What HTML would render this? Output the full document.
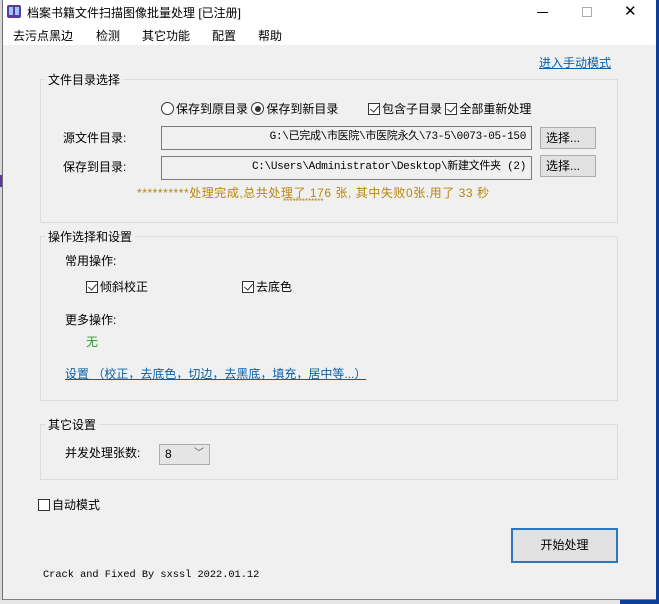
<!DOCTYPE html>
<html><head><meta charset="utf-8"><style>
*{margin:0;padding:0;box-sizing:border-box}
body{width:659px;height:604px;position:relative;overflow:hidden;background:#f0f0f0;font-family:"Liberation Sans","Noto Sans CJK SC",sans-serif;font-size:12px;color:#000}
.a{position:absolute;white-space:nowrap}
.grp{position:absolute;border:1px solid #dcdcdc}
.lg{position:absolute;background:#f0f0f0;padding:0 3px;font-size:12px}
.tb{position:absolute;background:#f0f0f0;border:1px solid #7a7a7a;text-align:right;padding-right:5px;font-family:"Liberation Mono","Noto Sans CJK SC",monospace;font-size:11px;line-height:21px;letter-spacing:-0.3px}
.btn{position:absolute;background:#e1e1e1;border:1px solid #adadad;text-align:center;line-height:20px}
.cb{display:inline-block;width:12px;height:12px;border:1px solid #333;vertical-align:-2px;margin-right:2px;position:relative;background:#fff}
.cb.k::after{content:"";position:absolute;left:3px;top:0px;width:4px;height:7px;border:solid #333;border-width:0 1.5px 1.5px 0;transform:rotate(40deg)}
.rb{display:inline-block;width:13px;height:13px;border:1px solid #333;border-radius:50%;vertical-align:-2px;margin-right:2px;position:relative;background:#fff}
.rb.k::after{content:"";position:absolute;left:2.5px;top:2.5px;width:6px;height:6px;border-radius:50%;background:#333}
.lnk{color:#0b5fa5;text-decoration:underline}
</style></head><body>
<div class="a" style="left:0;top:0;width:3px;height:604px;background:#d8d8d8"></div>
<div class="a" style="left:0;top:175px;width:3px;height:12px;background:#5a3b9a"></div>
<div class="a" style="left:2px;top:0;width:1px;height:600px;background:#707070"></div>
<div class="a" style="left:656px;top:0;width:3px;height:604px;background:#0c3f9c"></div>
<div class="a" style="left:620px;top:600px;width:39px;height:4px;background:#0c3f9c"></div>
<div class="a" style="left:0;top:600px;width:620px;height:4px;background:#e6e6e6"></div>
<div class="a" style="left:3px;top:599px;width:653px;height:1px;background:#808080"></div>
<!-- title -->
<div class="a" style="left:3px;top:0;width:653px;height:45px;background:#fff"></div>
<div class="a" style="left:7px;top:5px;width:14px;height:13px;background:#5a3b9a;border-radius:2px"></div>
<div class="a" style="left:9px;top:7px;width:4px;height:8px;background:#9fc3ff"></div>
<div class="a" style="left:15px;top:7px;width:4px;height:8px;background:#9fc3ff"></div>
<div class="a" style="left:27px;top:4px;font-size:12px">档案书籍文件扫描图像批量处理 [已注册]</div>
<div class="a" style="left:537px;top:12px;width:11px;height:1px;background:#000"></div>
<div class="a" style="left:582px;top:7px;width:10px;height:10px;border:1px solid #aaa"></div>
<div class="a" style="left:624px;top:2px;font-size:15px;color:#000">✕</div>
<div class="a" style="left:13px;top:27px">去污点黑边</div>
<div class="a" style="left:96px;top:27px">检测</div>
<div class="a" style="left:142px;top:27px">其它功能</div>
<div class="a" style="left:212px;top:27px">配置</div>
<div class="a" style="left:258px;top:27px">帮助</div>
<div class="a lnk" style="left:539px;top:54px">进入手动模式</div>
<!-- group 1 -->
<div class="grp" style="left:40px;top:79px;width:578px;height:144px"></div>
<div class="lg" style="left:45px;top:71px">文件目录选择</div>
<div class="a" style="left:161px;top:100px"><span class="rb"></span>保存到原目录 <span class="rb k"></span>保存到新目录</div>
<div class="a" style="left:368px;top:100px"><span class="cb k"></span>包含子目录 <span class="cb k"></span>全部重新处理</div>
<div class="a" style="left:63px;top:129px">源文件目录:</div>
<div class="a" style="left:63px;top:158px">保存到目录:</div>
<div class="tb" style="left:161px;top:126px;width:371px;height:24px">G:\已完成\市医院\市医院永久\73-5\0073-05-150</div>
<div class="tb" style="left:161px;top:156px;width:371px;height:24px">C:\Users\Administrator\Desktop\新建文件夹 (2)</div>
<div class="btn" style="left:540px;top:127px;width:56px;height:22px;text-align:left;padding-left:5px">选择...</div>
<div class="btn" style="left:540px;top:155px;width:56px;height:22px;text-align:left;padding-left:5px">选择...</div>
<div class="a" style="left:137px;top:184px;color:#b8860b;font-size:12px;letter-spacing:0.55px">**********处理完成,总共处理了 176 张, 其中失败0张.用了 33 秒</div>
<div class="a" style="left:283px;top:198px;color:#b8860b;font-size:8px;line-height:8px">*************</div>
<!-- group 2 -->
<div class="grp" style="left:40px;top:236px;width:578px;height:165px"></div>
<div class="lg" style="left:45px;top:228px">操作选择和设置</div>
<div class="a" style="left:65px;top:252px">常用操作:</div>
<div class="a" style="left:86px;top:278px"><span class="cb k"></span>倾斜校正</div>
<div class="a" style="left:242px;top:278px"><span class="cb k"></span>去底色</div>
<div class="a" style="left:65px;top:311px">更多操作:</div>
<div class="a" style="left:86px;top:333px;color:#2a9d2a">无</div>
<div class="a lnk" style="left:65px;top:365px">设置 （校正，去底色，切边，去黑底，填充，居中等...）</div>
<!-- group 3 -->
<div class="grp" style="left:40px;top:424px;width:578px;height:56px"></div>
<div class="lg" style="left:45px;top:416px">其它设置</div>
<div class="a" style="left:65px;top:444px">并发处理张数:</div>
<div class="a" style="left:159px;top:444px;width:51px;height:21px;border:1px solid #adadad;background:#e5e5e5;padding-left:5px;line-height:19px">8<span style="position:absolute;right:5px;top:-1px;font-size:10px;color:#555">﹀</span></div>
<div class="a" style="left:38px;top:496px"><span class="cb"></span>自动模式</div>
<div class="btn" style="left:511px;top:528px;width:107px;height:35px;line-height:31px;border:2px solid #2b78c2;font-size:12px">开始处理</div>
<div class="a" style="left:43px;top:569px;font-family:'Liberation Mono',monospace;font-size:10.3px">Crack and Fixed By sxssl  2022.01.12</div>
</body></html>
